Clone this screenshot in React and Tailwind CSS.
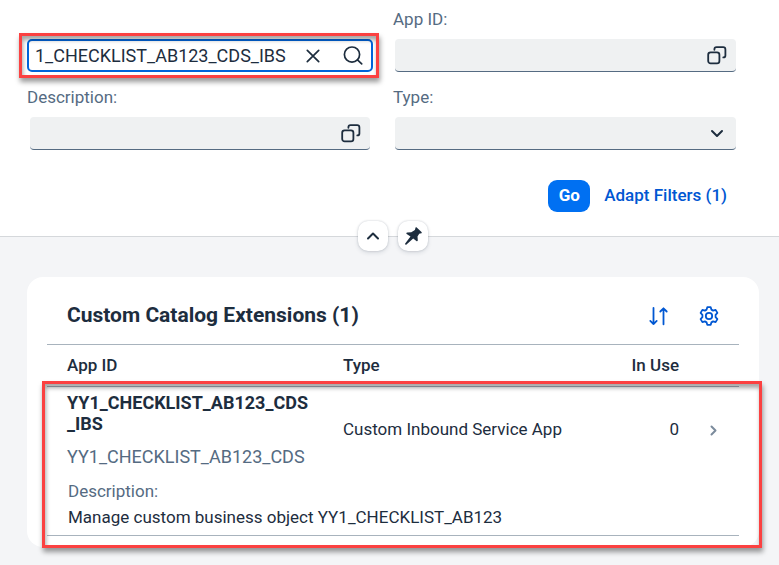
import React from "react";

function ValueHelpIcon() {
  return (
    <svg width="20" height="20" viewBox="0 0 20 20" fill="none" stroke="currentColor" strokeWidth="1.8" strokeLinecap="round" strokeLinejoin="round" aria-hidden="true">
      <rect x="1.2" y="7.4" width="11.2" height="11" rx="2.4" />
      <path d="M7.400 4.800V4.200C7.400 2.900 8.200 2.100 9.500 2.100h6.600c1.500 0 2.300.8 2.300 2.300v6c0 1.300-.8 2-2.100 2" />
    </svg>
  );
}

function Chevron({ d, className }) {
  return (
    <svg width="14" height="14" viewBox="0 0 14 14" fill="none" stroke="currentColor" strokeWidth="2" strokeLinecap="round" strokeLinejoin="round" className={className} aria-hidden="true">
      <path d={d} />
    </svg>
  );
}

function ClearIcon() {
  return (
    <svg width="14" height="14" viewBox="0 0 14 14" fill="none" stroke="currentColor" strokeWidth="1.7" strokeLinecap="round" aria-hidden="true">
      <path d="M1.300 1.300l11.400 11.400M12.700 1.300L1.300 12.700" />
    </svg>
  );
}

function SearchIcon() {
  return (
    <svg width="20" height="20" viewBox="0 0 20 20" fill="none" stroke="currentColor" strokeWidth="1.7" strokeLinecap="round" aria-hidden="true">
      <circle cx="9" cy="8.600" r="7.600" />
      <path d="M14.500 13.900l4.200 4" />
    </svg>
  );
}

function PinIcon() {
  return (
    <svg width="18" height="18" viewBox="0 0 18 18" fill="currentColor" aria-hidden="true">
      <path d="M11.6 0.5c.3-.4.8-.4 1.100 0l4.800 4.600c.4.4.3 1-.2 1.200l-2.100.5-1.700 2.800.3 3.700c0 .9-.8 1.300-1.400.8l-3.200-2.700-6.700 6.100c-.9.6-1.800-.3-1.300-1.100l5.300-6.900L2.700 7.100c-.7-.7-.3-1.600.6-1.600l4-.2 3.600-2.300z" />
    </svg>
  );
}

function SortIcon() {
  return (
    <svg width="20" height="20" viewBox="0 0 20 20" fill="none" stroke="currentColor" strokeWidth="1.8" strokeLinecap="round" strokeLinejoin="round" aria-hidden="true">
      <path d="M5.500 2v16M2.300 14.900l3.200 3.200 3.200-3.200M15.500 18.300v-16M12.300 5.500l3.200-3.200 3.200 3.200" />
    </svg>
  );
}

function GearIcon() {
  return (
    <svg width="20" height="20" viewBox="0 0 20 20" fill="none" stroke="currentColor" strokeWidth="1.8" strokeLinejoin="round" aria-hidden="true">
      <path d="M8.300 1.200h3.400l.7 2.400 1.700 1 2.500-.7 1.800 3-1.800 1.900v2.400l1.800 1.900-1.800 3-2.500-.7-1.700 1-.7 2.400H8.300l-.7-2.400-1.700-1-2.500.7-1.800-3 1.800-1.900V8.800L1.600 6.900l1.800-3 2.500.7 1.700-1z" />
      <circle cx="10" cy="10" r="3.200" />
    </svg>
  );
}

function Highlight({ className }) {
  return (
    <div
      className={`pointer-events-none absolute border-3 border-[#fb4141] shadow-[1px_4px_5px_rgba(0,0,0,0.4),inset_1px_4px_4px_rgba(0,0,0,0.35)] ${className}`}
      aria-hidden="true"
    />
  );
}

const label = "block text-[17px] leading-6 text-[#556b82]";
const field = "flex h-[33px] items-center rounded-[4px] border-b border-[#556b82] bg-[#eff1f2] text-[#1d2d3e]";
const roundButton = "flex size-[30px] items-center justify-center rounded-[10px] bg-white text-[#1d2d3e] shadow-[0_0_2px_rgba(34,53,72,0.25),0_2px_4px_rgba(34,53,72,0.12)]";

export default function App() {
  return (
    <div className="min-h-screen bg-[#f4f5f7] pb-[18px] font-['Roboto',sans-serif] text-[17px] text-[#1d2d3e]">
      <header className="border-b border-[#d5d8db] bg-white pt-[7px] pr-[43px] pl-[27px]">
        <div className="grid grid-cols-[346fr_343fr] items-end gap-x-5 gap-y-[13px]">
          <div className="relative">
            <div className="flex h-[33px] items-center rounded-[5px] border-2 border-[#0064d9] bg-white pr-2 pl-[6px]">
              <input
                type="text"
                aria-label="Search"
                defaultValue="1_CHECKLIST_AB123_CDS_IBS"
                className="h-full min-w-0 flex-1 bg-transparent pb-px text-[18px] outline-none"
              />
              <button type="button" aria-label="Clear" className="mr-[23px]"><ClearIcon /></button>
              <button type="button" aria-label="Search"><SearchIcon /></button>
            </div>
            <Highlight className="-top-[6px] -right-[6px] -bottom-[6px] -left-[8px]" />
          </div>
          <div>
            <label htmlFor="app-id" className={label}>App ID:</label>
            <div className={`${field} mt-2 ml-[2px] pr-[9px]`}>
              <input id="app-id" type="text" className="h-full min-w-0 flex-1 bg-transparent pl-2 outline-none" />
              <button type="button" aria-label="Select app ID"><ValueHelpIcon /></button>
            </div>
          </div>
          <div>
            <label htmlFor="description" className={label}>Description:</label>
            <div className={`${field} mx-[3px] mt-2 pr-[9px]`}>
              <input id="description" type="text" className="h-full min-w-0 flex-1 bg-transparent pl-2 outline-none" />
              <button type="button" aria-label="Select description"><ValueHelpIcon /></button>
            </div>
          </div>
          <div>
            <label htmlFor="type" className={label}>Type:</label>
            <div className={`${field} relative mt-2 ml-[2px]`}>
              <select id="type" defaultValue="" className="h-full w-full appearance-none bg-transparent pl-2 outline-none">
                <option value=""></option>
              </select>
              <Chevron d="M2 5l5 5 5-5" className="pointer-events-none absolute right-3" />
            </div>
          </div>
        </div>
        <div className="mt-[30px] flex items-center justify-end gap-[14px] pr-[9px]">
          <button type="button" className="h-8 w-[42px] rounded-[9px] bg-[#0070f2] font-bold text-white">Go</button>
          <button type="button" className="font-medium text-[#0057d2]">Adapt Filters (1)</button>
        </div>
        <div className="mt-[9px] -mr-[43px] -mb-[15px] -ml-[21px] flex justify-center gap-[10px]">
          <button type="button" aria-label="Collapse header" className={roundButton}><Chevron d="M2 9.500l5-5 5 5" /></button>
          <button type="button" aria-label="Pin header" className={roundButton}><PinIcon /></button>
        </div>
      </header>

      <main className="relative mt-10 mr-5 ml-[27px] rounded-[16px] bg-white px-5 pb-[11px]">
        <div className="flex h-[67px] items-center justify-between pt-[10px] pr-5 pl-5">
          <h1 className="text-[21px] font-bold">Custom Catalog Extensions (1)</h1>
          <div className="flex gap-[31px] text-[#0057d2]">
            <button type="button" aria-label="Sort"><SortIcon /></button>
            <button type="button" aria-label="Settings"><GearIcon /></button>
          </div>
        </div>
        <table className="w-full table-fixed border-collapse border-y border-[#a8b3bd] text-left">
          <colgroup>
            <col className="w-[276px]" />
            <col />
            <col className="w-[100px]" />
            <col className="w-[60px]" />
          </colgroup>
          <thead>
            <tr className="h-[42px] border-b border-[#a8b3bd]">
              <th className="pl-5 font-medium">App ID</th>
              <th className="pl-5 font-medium">Type</th>
              <th className="text-right font-medium">In Use</th>
              <th aria-label="Details"></th>
            </tr>
          </thead>
          <tbody>
            <tr className="h-[86px]">
              <td className="pt-[5px] pl-5 align-top text-[18px]">
                <div className="leading-[21px] font-bold">YY1_CHECKLIST_AB123_CDS<br />_IBS</div>
                <div className="mt-3 leading-[21px] text-[#556b82]">YY1_CHECKLIST_AB123_CDS</div>
              </td>
              <td className="pl-5">Custom Inbound Service App</td>
              <td className="text-right">0</td>
              <td>
                <button type="button" aria-label="Open" className="flex w-full justify-center pl-2 text-[#7b8b9c]">
                  <Chevron d="M5.500 3.500l4 4-4 4" />
                </button>
              </td>
            </tr>
            <tr>
              <td colSpan={4} className="pt-[5px] pb-[5px] pl-[21px]">
                <div className="leading-[26px] text-[#556b82]">Description:</div>
                <div className="leading-[26px]">Manage custom business object YY1_CHECKLIST_AB123</div>
              </td>
            </tr>
          </tbody>
        </table>
        <Highlight className="top-[104px] -right-[3px] -bottom-px left-[15px]" />
      </main>
    </div>
  );
}
